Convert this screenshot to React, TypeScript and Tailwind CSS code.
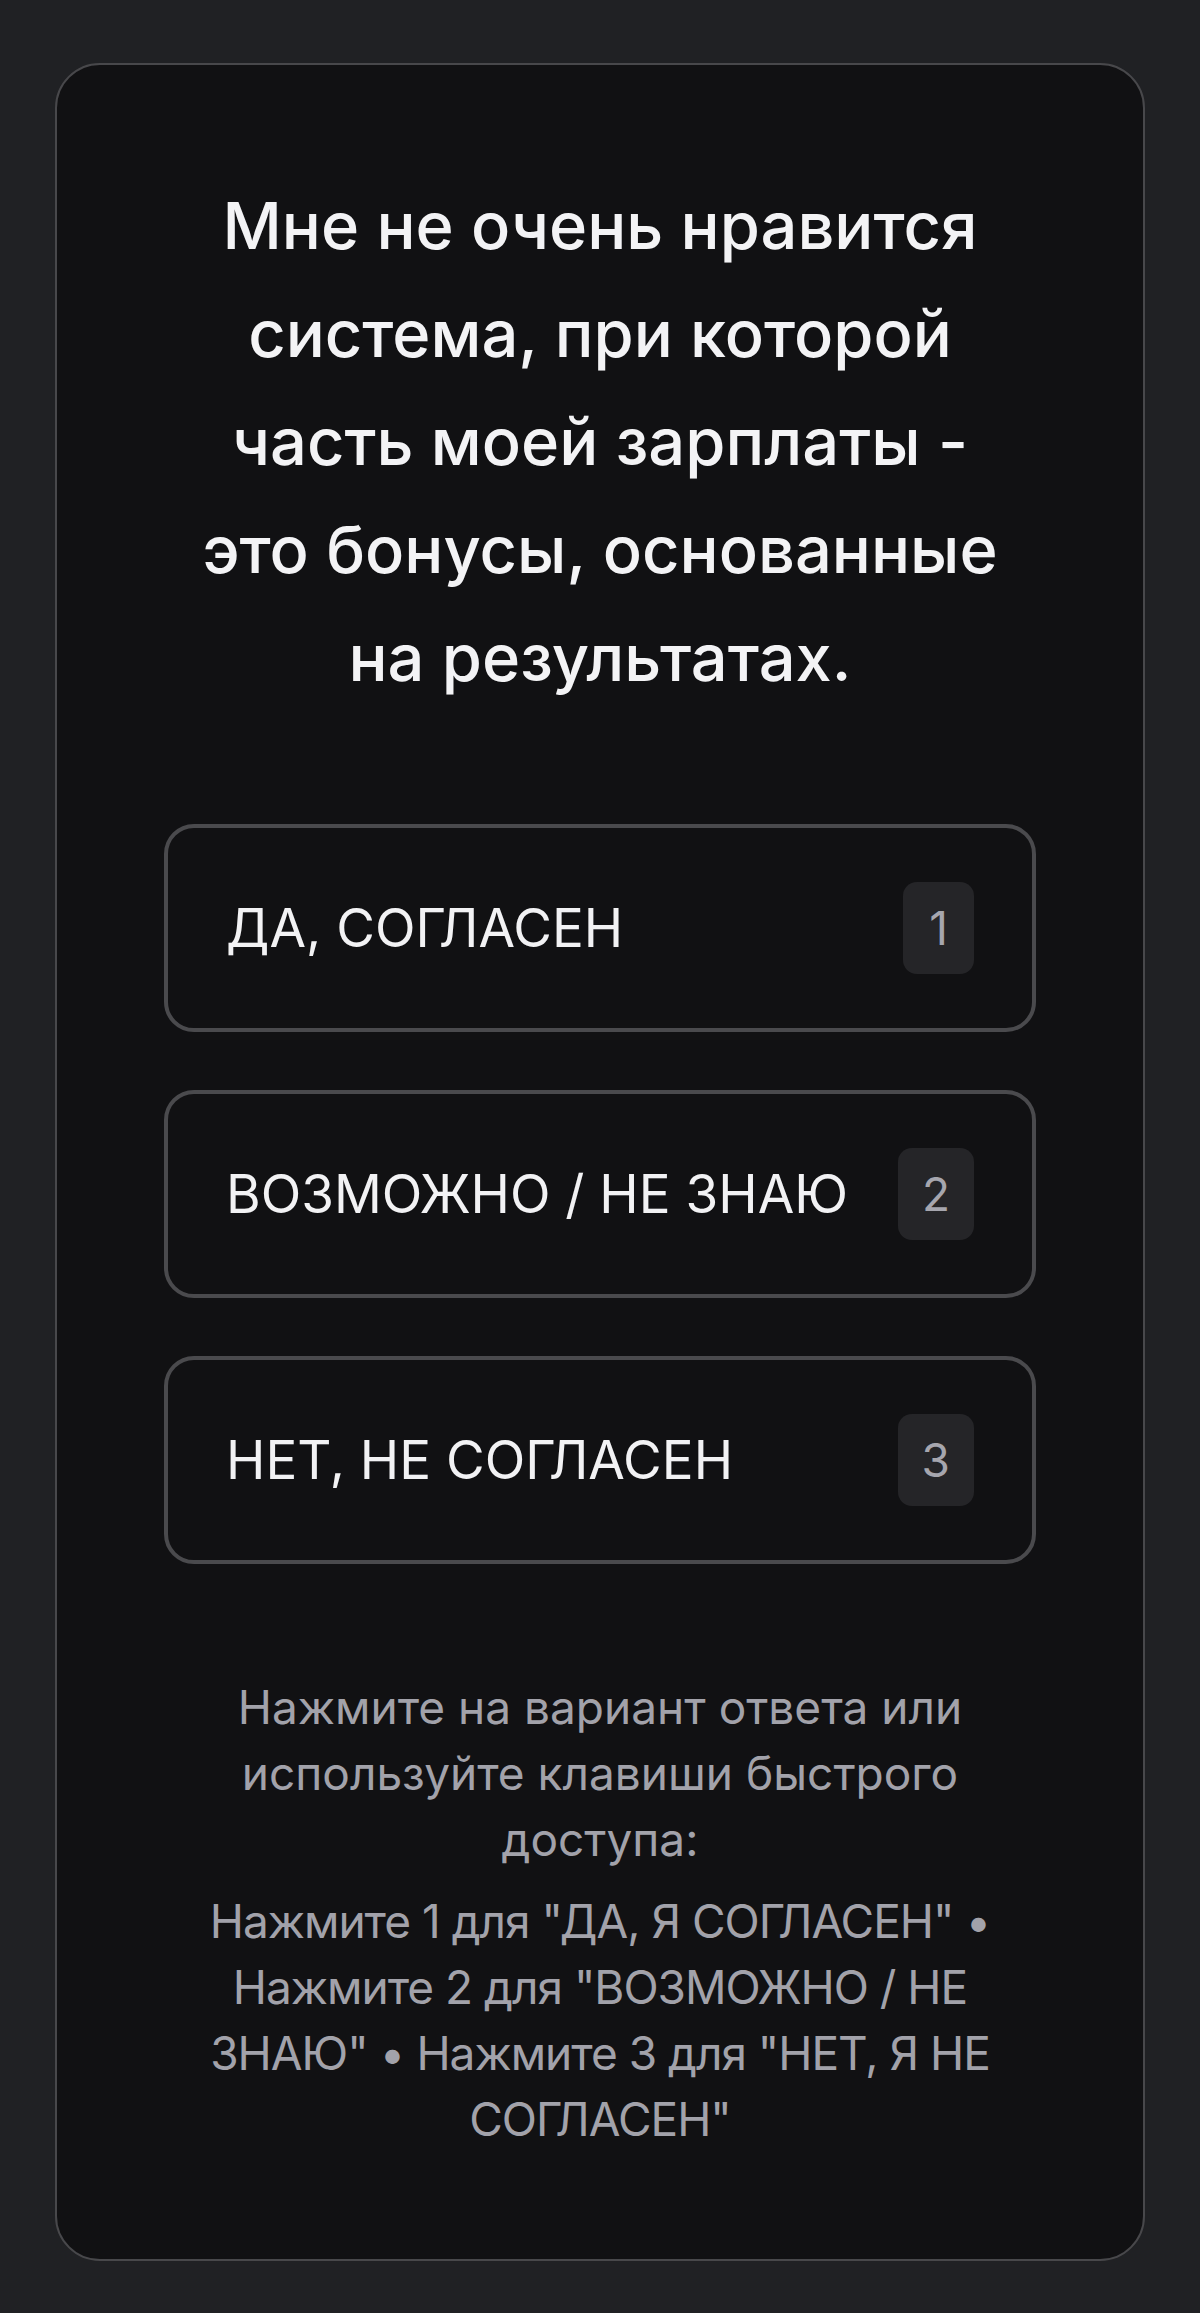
import React from 'react';

const font = { fontFamily: 'Inter, "Liberation Sans", Arial, sans-serif' };

// Answer option
const Option: React.FC<{ label: string; hotkey: string }> = ({ label, hotkey }) => (
  <button className="w-full h-[208px] flex items-center justify-between px-[58px] rounded-[30px] border-4 border-[#4a4a4d] bg-[#111113] text-left">
    <span className="text-[53px] leading-none text-[#f2f2f4]">{label}</span>
    <span className="h-[92px] min-w-[71px] px-[24px] flex items-center justify-center rounded-[14px] bg-[#252528] text-[46px] leading-none text-[#a6a6ae]">
      {hotkey}
    </span>
  </button>
);

export default function App() {
  const options = [
    { label: 'ДА, СОГЛАСЕН', hotkey: '1' },
    { label: 'ВОЗМОЖНО / НЕ ЗНАЮ', hotkey: '2' },
    { label: 'НЕТ, НЕ СОГЛАСЕН', hotkey: '3' },
  ];

  return (
    <div className="min-h-screen bg-[#202124] px-[55px] pt-[63px] pb-[50px]" style={font}>
      <div className="rounded-[45px] border-2 border-[#48484b] bg-[#111113] p-[107px]">
        <h1 className="text-center text-[65px] leading-[108px] font-medium text-[#f3f3f5]">
          Мне не очень нравится
          <br />
          система, при которой
          <br />
          часть моей зарплаты -
          <br />
          это бонусы, основанные
          <br />
          на результатах.
        </h1>

        <div className="mt-[112px] flex flex-col gap-[58px]">
          {options.map((o) => (
            <Option key={o.hotkey} label={o.label} hotkey={o.hotkey} />
          ))}
        </div>

        <div className="mt-[110px] text-center text-[46px] leading-[66px] text-[#a2a2aa]">
          <p>
            Нажмите на вариант ответа или
            <br />
            используйте клавиши быстрого
            <br />
            доступа:
          </p>
          <p className="mt-[16px] tracking-[-1px]">
            Нажмите 1 для "ДА, Я СОГЛАСЕН" •
            <br />
            Нажмите 2 для "ВОЗМОЖНО / НЕ
            <br />
            ЗНАЮ" • Нажмите 3 для "НЕТ, Я НЕ
            <br />
            СОГЛАСЕН"
          </p>
        </div>
      </div>
    </div>
  );
}
